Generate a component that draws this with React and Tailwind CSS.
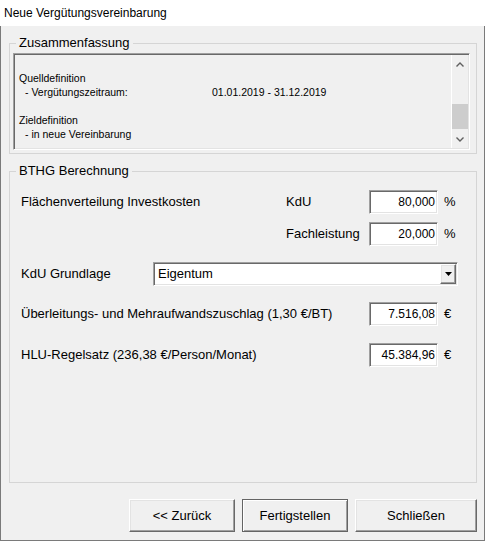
import React from 'react';

const SUNKEN = 'border border-t-[#a0a0a0] border-l-[#a0a0a0] border-r-white border-b-white shadow-[inset_1px_1px_0_#696969,inset_-1px_-1px_0_#e3e3e3] p-[1px]';
const RAISED = 'border border-t-white border-l-white border-r-[#696969] border-b-[#696969] shadow-[inset_-1px_-1px_0_#a0a0a0,inset_1px_1px_0_#e3e3e3]';

const Chevron = ({ up }) => (
  <svg width="8" height="5" viewBox="0 0 8 5">
    <polyline
      points={up ? '0.5,4.5 4,1 7.5,4.5' : '0.5,0.5 4,4 7.5,0.5'}
      fill="none"
      stroke="#606060"
      strokeWidth="1.4"
    />
  </svg>
);

const NumBox = ({ value, unit }) => (
  <>
    <div className={`w-[69px] h-[24px] bg-white ${SUNKEN} flex items-center justify-end pr-[2px] text-[12px]`}>
      {value}
    </div>
    <span className="ml-[6px] text-[13px]">{unit}</span>
  </>
);

const Button = ({ label, width, isDefault }) => (
  <div
    className={`h-[33px] flex items-center justify-center text-[13px] bg-[#f0f0f0] ${width} ${
      isDefault
        ? 'border border-[#646464] shadow-[inset_1px_1px_0_white,inset_-1px_-1px_0_#a0a0a0]'
        : RAISED
    }`}
  >
    {label}
  </div>
);

export default function App() {
  return (
    <div className="w-[485px] h-[541px] flex flex-col font-['Liberation_Sans',Arial,sans-serif] text-black">
      {/* title bar */}
      <div className="h-[26px] bg-white flex items-center pl-[4px] text-[12px]">
        Neue Vergütungsvereinbarung
      </div>

      <div className="flex-1 bg-[#f0f0f0] border-x border-b border-[#7a7a7a] flex flex-col">
        {/* Zusammenfassung */}
        <fieldset className="ml-[8px] mt-[9px] w-[468px] h-[119px] border border-[#d5d5d5]">
          <legend className="ml-[6px] px-[3px] text-[13px] leading-[16px]">Zusammenfassung</legend>
          <div className={`ml-[3px] mt-[2px] w-[457px] h-[97px] ${SUNKEN} flex`}>
            <div className="flex-1 pl-[4px] pt-[2px] text-[10.5px] leading-[14px]">
              <div className="h-[14px]" />
              <div>Quelldefinition</div>
              <div className="flex pl-[6px]">
                <span className="w-[187px]">- Vergütungszeitraum:</span>
                <span>01.01.2019 - 31.12.2019</span>
              </div>
              <div className="h-[14px]" />
              <div>Zieldefinition</div>
              <div className="pl-[6px]">- in neue Vereinbarung</div>
            </div>
            <div className="w-[17px] border-l border-white flex flex-col">
              <div className="h-[17px] flex items-center justify-center pt-[2px]">
                <Chevron up />
              </div>
              <div className="flex-1">
                <div className="mt-[32px] h-[25px] bg-[#cdcdcd]" />
              </div>
              <div className="h-[17px] flex items-center justify-center pb-[1px]">
                <Chevron />
              </div>
            </div>
          </div>
        </fieldset>

        {/* BTHG Berechnung */}
        <fieldset className="ml-[8px] mt-[9px] w-[468px] h-[320px] border border-[#d5d5d5] text-[13px]">
          <legend className="ml-[6px] px-[3px] text-[13px] leading-[16px]">BTHG Berechnung</legend>

          <div className="mt-[11px] pl-[11px] h-[24px] flex items-center">
            <span className="w-[265px]">Flächenverteilung Investkosten</span>
            <span className="w-[83px]">KdU</span>
            <NumBox value="80,000" unit="%" />
          </div>

          <div className="mt-[8px] pl-[11px] h-[24px] flex items-center">
            <span className="w-[265px]" />
            <span className="w-[83px]">Fachleistung</span>
            <NumBox value="20,000" unit="%" />
          </div>

          <div className="mt-[16px] pl-[11px] h-[24px] flex items-center">
            <span className="w-[132px]">KdU Grundlage</span>
            <div className={`w-[305px] h-[24px] bg-white ${SUNKEN} flex`}>
              <div className="flex-1 flex items-center pl-[3px]">Eigentum</div>
              <div className={`w-[16px] bg-[#f0f0f0] ${RAISED} flex items-center justify-center`}>
                <svg width="7" height="4" viewBox="0 0 7 4">
                  <polygon points="0,0 7,0 3.5,4" fill="black" />
                </svg>
              </div>
            </div>
          </div>

          <div className="mt-[16px] pl-[11px] h-[24px] flex items-center">
            <span className="w-[348px]">Überleitungs- und Mehraufwandszuschlag (1,30 €/BT)</span>
            <NumBox value="7.516,08" unit="€" />
          </div>

          <div className="mt-[17px] pl-[11px] h-[24px] flex items-center">
            <span className="w-[348px]">HLU-Regelsatz (236,38 €/Person/Monat)</span>
            <NumBox value="45.384,96" unit="€" />
          </div>
        </fieldset>

        {/* buttons */}
        <div className="mt-[16px] pr-[7px] flex justify-end gap-[7px]">
          <Button label="<< Zurück" width="w-[106px]" />
          <Button label="Fertigstellen" width="w-[106px]" isDefault />
          <Button label="Schließen" width="w-[122px]" />
        </div>
      </div>
    </div>
  );
}
